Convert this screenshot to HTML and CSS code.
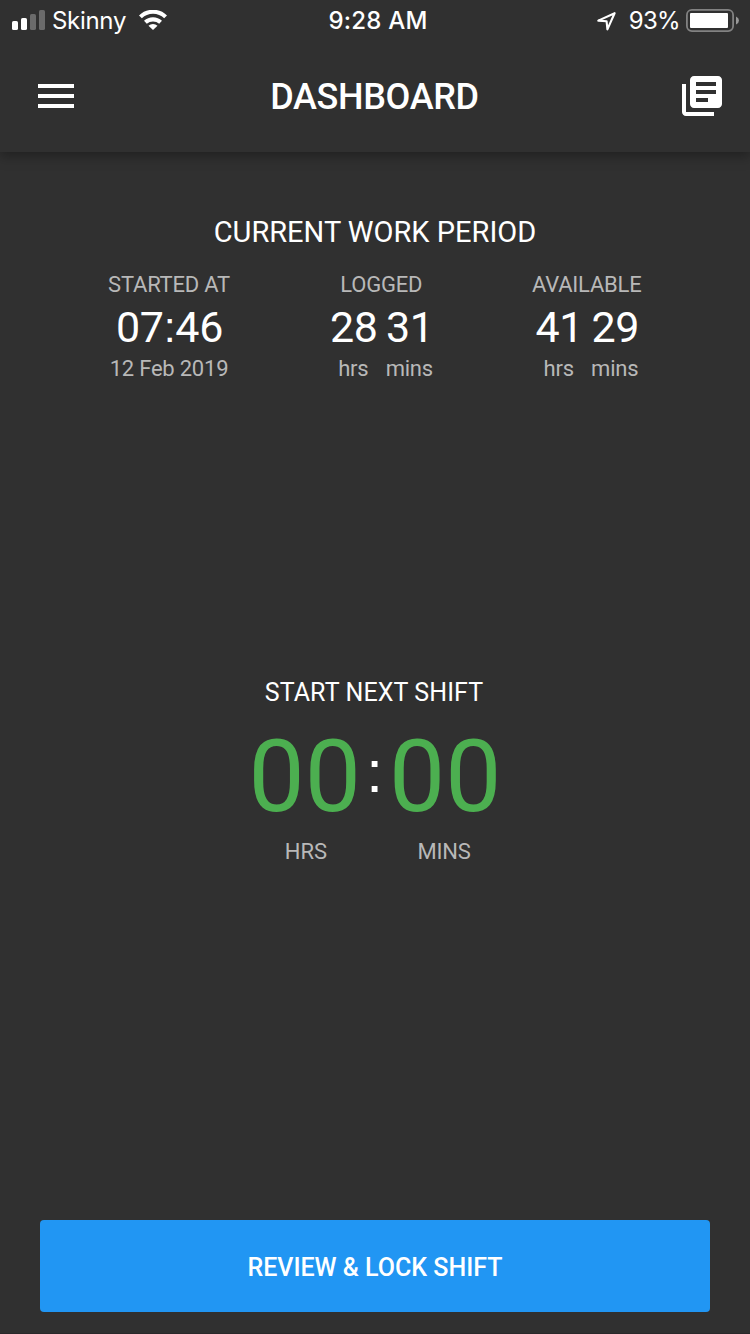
FILE: index.html
```html
<!DOCTYPE html>
<html lang="en">
<head>
<meta charset="utf-8">
<title>Dashboard</title>
<link rel="stylesheet" href="styles.css">
</head>
<body>
<div class="screen">
  <header class="header">
    <div class="status">
      <div class="status-left">
        <svg class="signal" width="33" height="20" viewBox="0 0 33 20"><g fill="#fff"><rect x="0" y="11" width="6" height="9" rx="1.6"/><rect x="9" y="8" width="6" height="12" rx="1.6"/></g><g fill="#6b6b6b"><rect x="18" y="4" width="6" height="16" rx="1.6"/><rect x="27" y="0" width="6" height="20" rx="1.6"/></g></svg>
        <span class="carrier">Skinny</span>
        <svg class="wifi" width="28" height="20" viewBox="0 0 28 20"><g fill="none" stroke="#fff" stroke-width="4.1"><path d="M1.4 6.9A18 18 0 0 1 26.6 6.9"/><path d="M6.4 12.3A11.2 11.2 0 0 1 21.6 12.3"/></g><path fill="#fff" d="M14 20L9.5 15.8A6.3 6.3 0 0 1 18.5 15.8Z"/></svg>
      </div>
      <span class="clock">9:28 AM</span>
      <div class="status-right">
        <svg class="location" width="19" height="19" viewBox="0 0 19 19"><path d="M1.3 8.6L17.6 1.2L10.4 17.4L9.6 9.3Z" fill="none" stroke="#fff" stroke-width="2.1" stroke-linejoin="round"/></svg>
        <span class="percent">93%</span>
        <svg class="battery" width="53" height="23" viewBox="0 0 53 23"><rect x=".9" y=".9" width="46.2" height="21.2" rx="5" fill="none" stroke="#828282" stroke-width="1.8"/><rect x="4" y="4" width="38" height="15" rx="1" fill="#fff"/><path d="M50 7.5Q53 9 53 11.5T50 15.5Z" fill="#989898"/></svg>
      </div>
    </div>
    <div class="appbar">
      <svg width="48" height="48" viewBox="0 0 24 24" fill="#fff"><path d="M3 18h18v-2H3v2zm0-5h18v-2H3v2zm0-7v2h18V6H3z"/></svg>
      <h1 class="title">DASHBOARD</h1>
      <svg width="48" height="48" viewBox="0 0 24 24" fill="#fff"><path d="M4 6H2v14c0 1.1.9 2 2 2h14v-2H4V6zm16-4H8c-1.1 0-2 .9-2 2v12c0 1.1.9 2 2 2h12c1.1 0 2-.9 2-2V4c0-1.1-.9-2-2-2zm-1 9H9V9h10v2zm-4 4H9v-2h6v2zm4-8H9V5h10v2z"/></svg>
    </div>
  </header>
  <main class="main">
    <section class="period">
      <h2 class="period-title">CURRENT WORK PERIOD</h2>
      <div class="stats">
        <div class="stat">
          <span class="label tight">STARTED AT</span>
          <span class="value clocked">07<span class="sep">:</span>46</span>
          <span class="label tight">12 Feb 2019</span>
        </div>
        <div class="stat">
          <span class="label tight">LOGGED</span>
          <div class="duration">
            <span class="value">28</span><span class="value">31</span>
            <span class="label tight">hrs</span><span class="label tight">mins</span>
          </div>
        </div>
        <div class="stat">
          <span class="label tight">AVAILABLE</span>
          <div class="duration">
            <span class="value">41</span><span class="value">29</span>
            <span class="label tight">hrs</span><span class="label tight">mins</span>
          </div>
        </div>
      </div>
    </section>
    <section class="shift">
      <h2 class="shift-title">START NEXT SHIFT</h2>
      <div class="timer">
        <span class="digits">00</span><span class="colon">:</span><span class="digits">00</span>
      </div>
      <div class="units"><span class="label">HRS</span><span class="label tight">MINS</span></div>
    </section>
    <button class="lock">REVIEW &amp; LOCK SHIFT</button>
  </main>
</div>
</body>
</html>
```

FILE: styles.css
```css
* { box-sizing: border-box; }
body { margin: 0; background: #303030; color: #fff; font-family: Roboto, "Liberation Sans", sans-serif; }
svg { display: block; flex: none; }
h1, h2 { margin: 0; font-weight: 400; }
.screen { height: 1334px; display: flex; flex-direction: column; overflow: hidden; border-bottom: 1px solid #2a282a; }
.header { height: 152px; flex: none; background: #303030; box-shadow: 0 4px 12px rgba(0, 0, 0, .34); }
.status { height: 40px; display: grid; grid-template-columns: 1fr auto 1fr; align-items: center; padding: 0 11px 0 12px; font: 24px/38px Inter, Roboto, sans-serif; }
.status-left, .status-right { display: flex; align-items: center; }
.status-right { justify-content: flex-end; }
.carrier { margin-left: 7px; padding-top: 2px; letter-spacing: -.3px; }
.wifi { margin-left: 13px; }
.clock { font-weight: 500; letter-spacing: .2px; padding: 2px 0 0 5px; }
.percent { margin: 0 6px 0 13px; padding-top: 2px; letter-spacing: -.7px; }
.location { margin-top: 2px; }
.appbar { height: 112px; display: flex; align-items: center; justify-content: space-between; padding: 0 24px 0 32px; }
.title { font-size: 36px; line-height: 48px; font-weight: 500; letter-spacing: -.35px; padding: 2px 9px 0 0; }
.main { flex: 1; display: flex; flex-direction: column; align-items: center; padding-top: 60px; }
.period { display: flex; flex-direction: column; align-items: center; height: 461px; }
.period-title { font-size: 29px; line-height: 40px; }
.stats { width: 534px; margin: 18px 1px 0 0; display: flex; justify-content: space-between; }
.stat { display: flex; flex-direction: column; align-items: center; }
.stat:first-child { width: 123px; }
.label { font-size: 22px; line-height: 30px; color: #b8b8b8; text-align: center; }
.tight { letter-spacing: -.22px; white-space: nowrap; }
.value { font-size: 43px; line-height: 54px; text-align: center; letter-spacing: -.3px; padding-left: 1px; }
.sep { font-family: "Liberation Sans", sans-serif; line-height: 1; }
.duration { display: grid; grid-template-columns: 49px 49px; column-gap: 7px; justify-items: center; }
.shift { display: flex; flex-direction: column; align-items: center; height: 547px; }
.shift-title { font-size: 25px; line-height: 40px; letter-spacing: .1px; padding-right: 2px; }
.timer { display: flex; align-items: center; margin-top: 4px; }
.digits { font-size: 100px; line-height: 120px; color: #4caf50; }
.colon { width: 28px; text-align: center; font: 60px/108px "Liberation Sans", sans-serif; padding: 0 1px 10px 0; }
.units { display: grid; grid-template-columns: 138px 138px; justify-items: center; }
.lock { width: 670px; height: 92px; flex: none; border: 0; border-radius: 4px; background: #2196f3; color: #fff; font: 500 25px/40px Roboto, sans-serif; padding: 3px 0 0; }
```
